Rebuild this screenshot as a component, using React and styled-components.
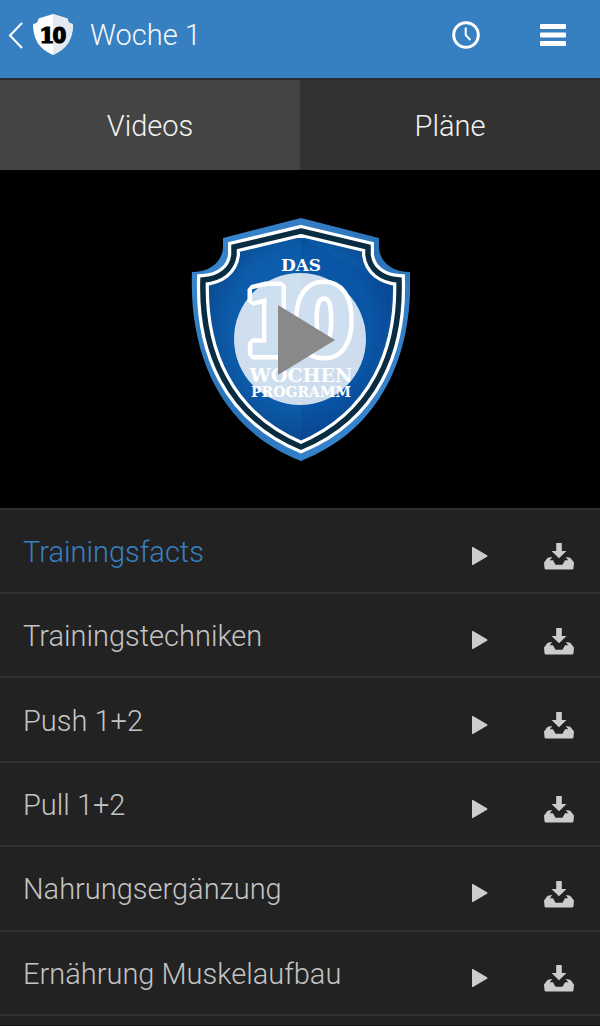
import React, { useState } from "react";
import styled, { createGlobalStyle } from "styled-components";

const GlobalStyle = createGlobalStyle`
  *, *::before, *::after { box-sizing: border-box; }
  body {
    margin: 0;
    background: #222;
    font-family: Roboto, "Liberation Sans", sans-serif;
    font-weight: 300;
  }
`;

const Page = styled.div`
  display: flex;
  flex-direction: column;
  min-height: 100vh;
  padding-bottom: 9px;
  border-bottom: 1px solid #111;
`;

const Header = styled.header`
  display: flex;
  align-items: center;
  height: 80px;
  padding: 0 34px 8px 8px;
  background: #3680c2;
  border-bottom: 2px solid #2a2a2d;
`;

const BackLink = styled.a`
  display: flex;
  align-items: center;
  gap: 10px;
`;

const Title = styled.h1`
  flex: 1;
  margin: 0 0 0 17px;
  color: #f4f8fc;
  font-size: 29px;
  line-height: 36px;
  font-weight: 300;
`;

const Actions = styled.div`
  display: flex;
  align-items: center;
  gap: 60px;
`;

const IconButton = styled.button`
  display: flex;
  padding: 0;
  border: 0;
  background: none;
  color: ${(p) => p.$color || "#fff"};
  cursor: pointer;
`;

const Tabs = styled.div`
  display: grid;
  grid-template-columns: 1fr 1fr;
`;

const Tab = styled.button`
  height: 90px;
  padding: 2px 0 0;
  border: 0;
  background: ${(p) => (p.$active ? "#444" : "#323232")};
  color: #f2f2f2;
  font: inherit;
  font-size: 29px;
  line-height: 36px;
  cursor: pointer;
`;

const Player = styled.section`
  display: grid;
  place-items: center;
  aspect-ratio: 16 / 9;
  background: #000;

  > * { grid-area: 1 / 1; }
`;

const PlayOverlay = styled.button`
  display: flex;
  padding: 0;
  border: 0;
  border-radius: 50%;
  background: rgba(255, 255, 255, 0.8);
  color: #898989;
  cursor: pointer;
`;

const List = styled.ul`
  flex: 1;
  display: grid;
  grid-auto-rows: 1fr;
  margin: 0;
  padding: 0;
  list-style: none;
  border-top: 2px solid #303030;
`;

const Row = styled.li`
  display: flex;
  align-items: center;
  min-height: 84px;
  padding: 0 26px 0 23px;
  border-bottom: 2px solid #303030;
`;

const RowTitle = styled.span`
  flex: 1;
  padding-top: 2px;
  color: ${(p) => (p.$active ? "#3680c2" : "#c4c4c4")};
  font-size: 29px;
  line-height: 36px;
`;

const RowActions = styled.div`
  display: flex;
  align-items: center;
  gap: 56px;
  padding-top: 10px;
`;

const BackIcon = () => (
  <svg width="15" height="28" viewBox="0 0 15 28" fill="none" stroke="#fff" strokeWidth="2" aria-hidden="true">
    <path d="M14 2 2 14.5 14 27" />
  </svg>
);

const Badge = () => (
  <svg width="40" height="42" viewBox="0 0 40 42" aria-hidden="true">
    <path fill="#fff" d="M20 0 34.500 4.500Q35 9.500 40 10C40 25 34 35 20 41 6 35 0 25 0 10Q5 9.500 5.500 4.500Z" />
    <path fill="#e3e8f1" d="M20 0 34.500 4.500Q35 9.500 40 10C40 25 34 35 20 41Z" />
    <text
      y="29"
      textAnchor="middle"
      fontFamily="DejaVu Serif, serif"
      fontWeight="700"
      fontSize="22"
      stroke="#000"
      strokeWidth="1.200"
    >
      <tspan x="14">1</tspan>
      <tspan x="26.500" fontFamily="DejaVu Sans Condensed, DejaVu Sans, sans-serif">0</tspan>
    </text>
  </svg>
);

const ClockIcon = () => (
  <svg width="28" height="28" viewBox="0 0 28 28" fill="none" stroke="currentColor" aria-hidden="true">
    <circle cx="14" cy="14" r="12.3" strokeWidth="3" />
    <path d="M13.7 6.5V14l4.6 5" strokeWidth="2" />
  </svg>
);

const MenuIcon = () => (
  <svg width="26" height="22" viewBox="0 0 26 22" fill="currentColor" aria-hidden="true">
    <rect width="26" height="5" rx="1" />
    <rect y="8.5" width="26" height="5" rx="1" />
    <rect y="17" width="26" height="5" rx="1" />
  </svg>
);

const PlayIcon = () => (
  <svg width="16" height="18" viewBox="0 0 16 18" fill="currentColor" aria-hidden="true">
    <path d="M0 .5Q0-.5 1 0L15 8.2q1 .8 0 1.6L1 18q-1 .5-1-.5z" />
  </svg>
);

const DownloadIcon = () => (
  <svg width="30" height="29" viewBox="0 -2 30 29" fill="currentColor" aria-hidden="true">
    <path d="M12.2 0h5.6v8h4.7L15 15.2 7.500 8h4.700z" />
    <path d="M0 19.500 3.300 15.300Q4 14.500 5 14.500L8.300 14 5.800 17.300H9L11.500 21.800h7L21 17.300h3.200L21.700 14 25 14.500Q26 14.500 26.700 15.300L30 19.500 29.500 25q0 1.500-1.500 1.500H2Q.5 26.500.5 25z" />
  </svg>
);

const frame =
  "M301 231 368 247V255C370 270 382 279 399 280C401 350 375 416 301 447C227 416 201 350 203 280C220 279 232 270 234 255V247Z";

const ShieldLogo = () => (
  <svg width="220" height="244" viewBox="190 217 220 244" role="img" aria-label="Das 10 Wochen Programm">
    <defs>
      <linearGradient id="rim" x1="0" y1="0" x2="1" y2="1">
        <stop offset="0" stopColor="#3c8ad2" />
        <stop offset=".5" stopColor="#2a72b8" />
        <stop offset="1" stopColor="#3f8fdb" />
      </linearGradient>
      <radialGradient id="field" cx=".5" cy=".45" r=".6">
        <stop offset="0" stopColor="#0d63b4" />
        <stop offset=".6" stopColor="#0c5cab" />
        <stop offset="1" stopColor="#0a3f80" />
      </radialGradient>
    </defs>
    <path
      fill="url(#rim)"
      d="M301 218 379 238V248C380 262 392 272 410 272C413 350 385 428 301 461C217 428 189 350 192 272C210 272 222 262 223 248V238Z"
    />
    <path d={frame} fill="url(#field)" stroke="#fff" strokeWidth="12" />
    <path d={frame} fill="none" stroke="#082c42" strokeWidth="5.500" />
    <path d="M301 238V441C366 412 391 350 391 286Z" fill="#003a90" opacity=".18" />
    <g fill="#fff" fontFamily="DejaVu Serif, serif" fontWeight="700" textAnchor="middle">
      <text x="301" y="271" fontSize="17">DAS</text>
      <text x="301" y="382" fontSize="19">WOCHEN</text>
      <text x="301" y="397" fontSize="14">PROGRAMM</text>
    </g>
    <text
      y="355"
      fontFamily="DejaVu Sans Condensed, DejaVu Sans, sans-serif"
      fontWeight="700"
      fontSize="94"
      textAnchor="middle"
      fill="#0d5fae"
      stroke="#fff"
      strokeWidth="9"
      strokeLinejoin="bevel"
      paintOrder="stroke"
    >
      <tspan x="272">1</tspan>
      <tspan x="324">0</tspan>
    </text>
  </svg>
);

const BigPlayIcon = () => (
  <svg width="132" height="132" viewBox="0 0 132 132" fill="currentColor" aria-hidden="true">
    <path d="M44 32 101 67 44 102z" />
  </svg>
);

const videos = [
  "Trainingsfacts",
  "Trainingstechniken",
  "Push 1+2",
  "Pull 1+2",
  "Nahrungsergänzung",
  "Ernährung Muskelaufbau",
];

export default function App() {
  const [tab, setTab] = useState("Videos");
  const [current, setCurrent] = useState(videos[0]);

  return (
    <>
      <GlobalStyle />
      <Page>
        <Header>
          <BackLink href="#" aria-label="Zurück">
            <BackIcon />
            <Badge />
          </BackLink>
          <Title>Woche 1</Title>
          <Actions>
            <IconButton aria-label="Verlauf"><ClockIcon /></IconButton>
            <IconButton aria-label="Menü"><MenuIcon /></IconButton>
          </Actions>
        </Header>
        <Tabs role="tablist">
          {["Videos", "Pläne"].map((name) => (
            <Tab key={name} role="tab" aria-selected={tab === name} $active={tab === name} onClick={() => setTab(name)}>
              {name}
            </Tab>
          ))}
        </Tabs>
        <Player>
          <ShieldLogo />
          <PlayOverlay aria-label="Video abspielen"><BigPlayIcon /></PlayOverlay>
        </Player>
        <List>
          {videos.map((name) => (
            <Row key={name}>
              <RowTitle $active={name === current}>{name}</RowTitle>
              <RowActions>
                <IconButton $color="#ccc" aria-label={`${name} abspielen`} onClick={() => setCurrent(name)}>
                  <PlayIcon />
                </IconButton>
                <IconButton $color="#ccc" aria-label={`${name} herunterladen`}>
                  <DownloadIcon />
                </IconButton>
              </RowActions>
            </Row>
          ))}
        </List>
      </Page>
    </>
  );
}
